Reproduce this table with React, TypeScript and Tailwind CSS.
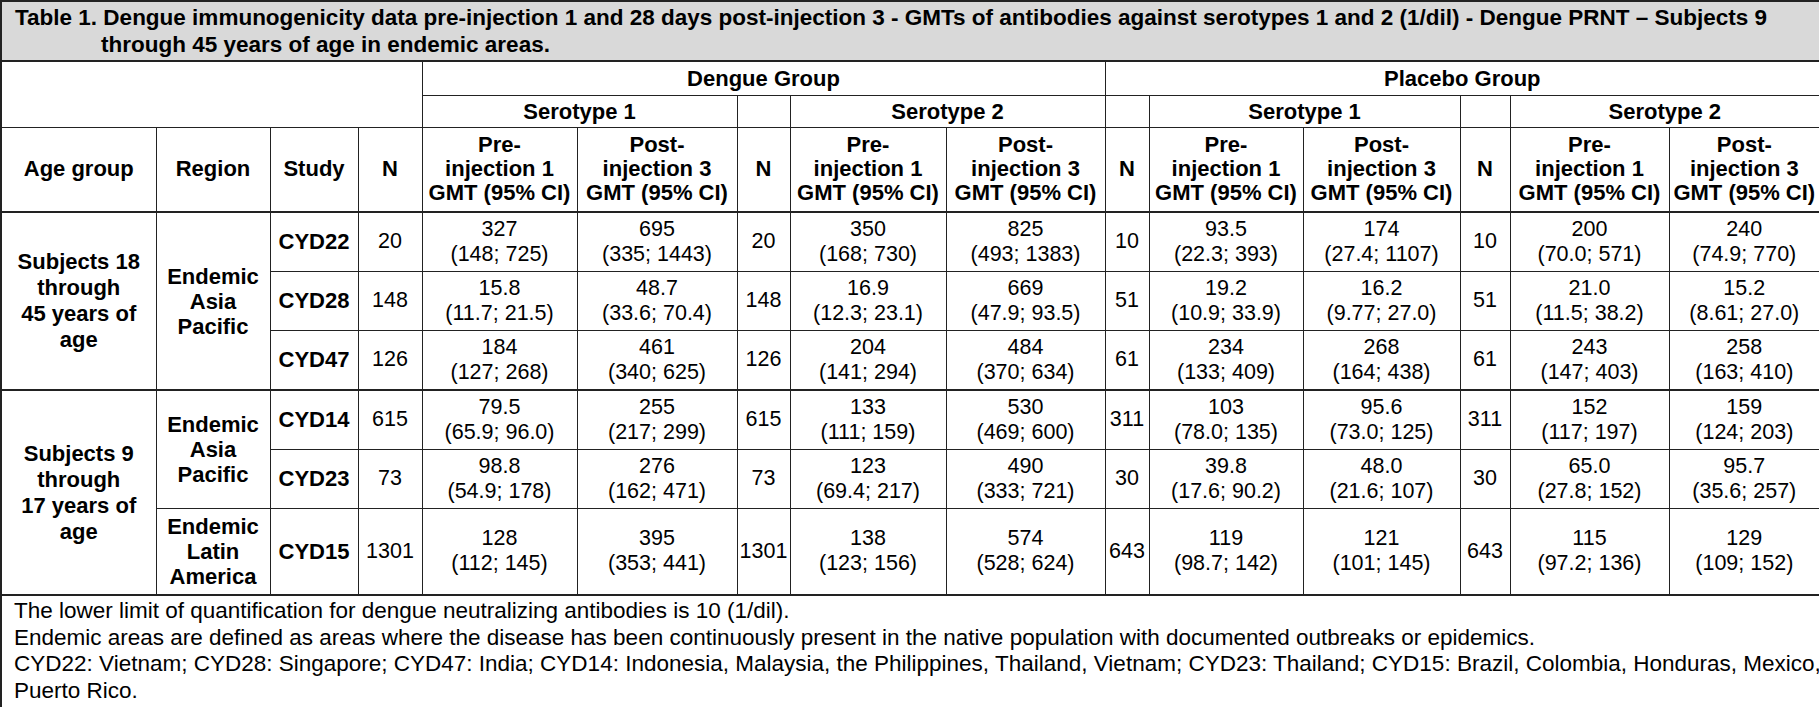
import React from 'react';

// one entry per data row, cells after "Study"; "\n" splits GMT and CI
const rows: { study: string; cells: string[] }[] = [
  { study: 'CYD22', cells: ['20', '327\n(148; 725)', '695\n(335; 1443)', '20', '350\n(168; 730)', '825\n(493; 1383)', '10', '93.5\n(22.3; 393)', '174\n(27.4; 1107)', '10', '200\n(70.0; 571)', '240\n(74.9; 770)'] },
  { study: 'CYD28', cells: ['148', '15.8\n(11.7; 21.5)', '48.7\n(33.6; 70.4)', '148', '16.9\n(12.3; 23.1)', '669\n(47.9; 93.5)', '51', '19.2\n(10.9; 33.9)', '16.2\n(9.77; 27.0)', '51', '21.0\n(11.5; 38.2)', '15.2\n(8.61; 27.0)'] },
  { study: 'CYD47', cells: ['126', '184\n(127; 268)', '461\n(340; 625)', '126', '204\n(141; 294)', '484\n(370; 634)', '61', '234\n(133; 409)', '268\n(164; 438)', '61', '243\n(147; 403)', '258\n(163; 410)'] },
  { study: 'CYD14', cells: ['615', '79.5\n(65.9; 96.0)', '255\n(217; 299)', '615', '133\n(111; 159)', '530\n(469; 600)', '311', '103\n(78.0; 135)', '95.6\n(73.0; 125)', '311', '152\n(117; 197)', '159\n(124; 203)'] },
  { study: 'CYD23', cells: ['73', '98.8\n(54.9; 178)', '276\n(162; 471)', '73', '123\n(69.4; 217)', '490\n(333; 721)', '30', '39.8\n(17.6; 90.2)', '48.0\n(21.6; 107)', '30', '65.0\n(27.8; 152)', '95.7\n(35.6; 257)'] },
  { study: 'CYD15', cells: ['1301', '128\n(112; 145)', '395\n(353; 441)', '1301', '138\n(123; 156)', '574\n(528; 624)', '643', '119\n(98.7; 142)', '121\n(101; 145)', '643', '115\n(97.2; 136)', '129\n(109; 152)'] },
];

const heights = ['h-[59px]', 'h-[59px]', 'h-[60px]', 'h-[59px]', 'h-[59px]', 'h-[87px]'];

const cell = 'border border-[#222] text-center align-middle p-0';
const gmt = 'Pre-\ninjection 1\nGMT (95% CI)';
const post = 'Post-\ninjection 3\nGMT (95% CI)';

const DataCells = ({ r }: { r: { study: string; cells: string[] } }) => (
  <>
    <td className={`${cell} font-bold text-[22px]`}>{r.study}</td>
    {r.cells.map((c, i) => (
      <td key={i} className={`${cell} whitespace-pre-line`}>{c}</td>
    ))}
  </>
);

export default function App() {
  return (
    <div className="w-[1819px] h-[707px] bg-white text-black font-['Liberation_Sans',Arial,sans-serif] text-[21.5px] leading-[25px]">
      <table className="w-[1819px] table-fixed border-collapse border-2 border-[#222]">
        <colgroup>
          <col className="w-[155px]" />
          <col className="w-[114px]" />
          <col className="w-[88px]" />
          <col className="w-[64px]" />
          <col className="w-[155px]" />
          <col className="w-[160px]" />
          <col className="w-[53px]" />
          <col className="w-[156px]" />
          <col className="w-[159px]" />
          <col className="w-[44px]" />
          <col className="w-[154px]" />
          <col className="w-[157px]" />
          <col className="w-[50px]" />
          <col className="w-[159px]" />
          <col className="w-[151px]" />
        </colgroup>
        <tbody>
          <tr className="h-[60px]">
            <td colSpan={15} className="border-2 border-[#222] bg-[#d9d9d9] font-bold text-left align-middle pl-[99px] pr-1 indent-[-86px] leading-[27px] text-[22.5px]">
              Table 1. Dengue immunogenicity data pre-injection 1 and 28 days post-injection 3 - GMTs of antibodies against serotypes 1 and 2 (1/dil) - Dengue PRNT – Subjects 9
              <br />
              through 45 years of age in endemic areas.
            </td>
          </tr>
          <tr className="h-[34px] font-bold text-[22px]">
            <td colSpan={4} rowSpan={2} className={cell}></td>
            <td colSpan={5} className={cell}>Dengue Group</td>
            <td colSpan={6} className={cell}>Placebo Group</td>
          </tr>
          <tr className="h-[32px] font-bold text-[22px]">
            <td colSpan={2} className={cell}>Serotype 1</td>
            <td className={cell}></td>
            <td colSpan={2} className={cell}>Serotype 2</td>
            <td className={cell}></td>
            <td colSpan={2} className={cell}>Serotype 1</td>
            <td className={cell}></td>
            <td colSpan={2} className={cell}>Serotype 2</td>
          </tr>
          <tr className="h-[85px] font-bold text-[22px] leading-[24px] border-b-2 border-[#222]">
            <td className={cell}>Age group</td>
            <td className={cell}>Region</td>
            <td className={cell}>Study</td>
            <td className={cell}>N</td>
            <td className={`${cell} whitespace-pre-line`}>{gmt}</td>
            <td className={`${cell} whitespace-pre-line`}>{post}</td>
            <td className={cell}>N</td>
            <td className={`${cell} whitespace-pre-line`}>{gmt}</td>
            <td className={`${cell} whitespace-pre-line`}>{post}</td>
            <td className={cell}>N</td>
            <td className={`${cell} whitespace-pre-line`}>{gmt}</td>
            <td className={`${cell} whitespace-pre-line`}>{post}</td>
            <td className={cell}>N</td>
            <td className={`${cell} whitespace-pre-line`}>{gmt}</td>
            <td className={`${cell} whitespace-pre-line`}>{post}</td>
          </tr>
          {rows.map((r, i) => (
            <tr key={r.study} className={`${heights[i]} ${i === 2 || i === 5 ? 'border-b-2 border-[#222]' : ''}`}>
              {i === 0 && (
                <td rowSpan={3} className={`${cell} font-bold text-[22px] whitespace-pre-line leading-[26px]`}>{'Subjects 18\nthrough\n45 years of\nage'}</td>
              )}
              {i === 3 && (
                <td rowSpan={3} className={`${cell} font-bold text-[22px] whitespace-pre-line leading-[26px]`}>{'Subjects 9\nthrough\n17 years of\nage'}</td>
              )}
              {i === 0 && (
                <td rowSpan={3} className={`${cell} font-bold text-[22px] whitespace-pre-line`}>{'Endemic\nAsia\nPacific'}</td>
              )}
              {i === 3 && (
                <td rowSpan={2} className={`${cell} font-bold text-[22px] whitespace-pre-line`}>{'Endemic\nAsia\nPacific'}</td>
              )}
              {i === 5 && (
                <td className={`${cell} font-bold text-[22px] whitespace-pre-line`}>{'Endemic\nLatin\nAmerica'}</td>
              )}
              <DataCells r={r} />
            </tr>
          ))}
          <tr className="h-[113px]">
            <td colSpan={15} className="border-2 border-[#222] text-left align-top pl-[12px] pr-0 pt-[2px] text-[22.5px] leading-[26.5px] whitespace-nowrap">
              The lower limit of quantification for dengue neutralizing antibodies is 10 (1/dil).
              <br />
              Endemic areas are defined as areas where the disease has been continuously present in the native population with documented outbreaks or epidemics.
              <br />
              CYD22: Vietnam; CYD28: Singapore; CYD47: India; CYD14: Indonesia, Malaysia, the Philippines, Thailand, Vietnam; CYD23: Thailand; CYD15: Brazil, Colombia, Honduras, Mexico,
              <br />
              Puerto Rico.
            </td>
          </tr>
        </tbody>
      </table>
    </div>
  );
}
